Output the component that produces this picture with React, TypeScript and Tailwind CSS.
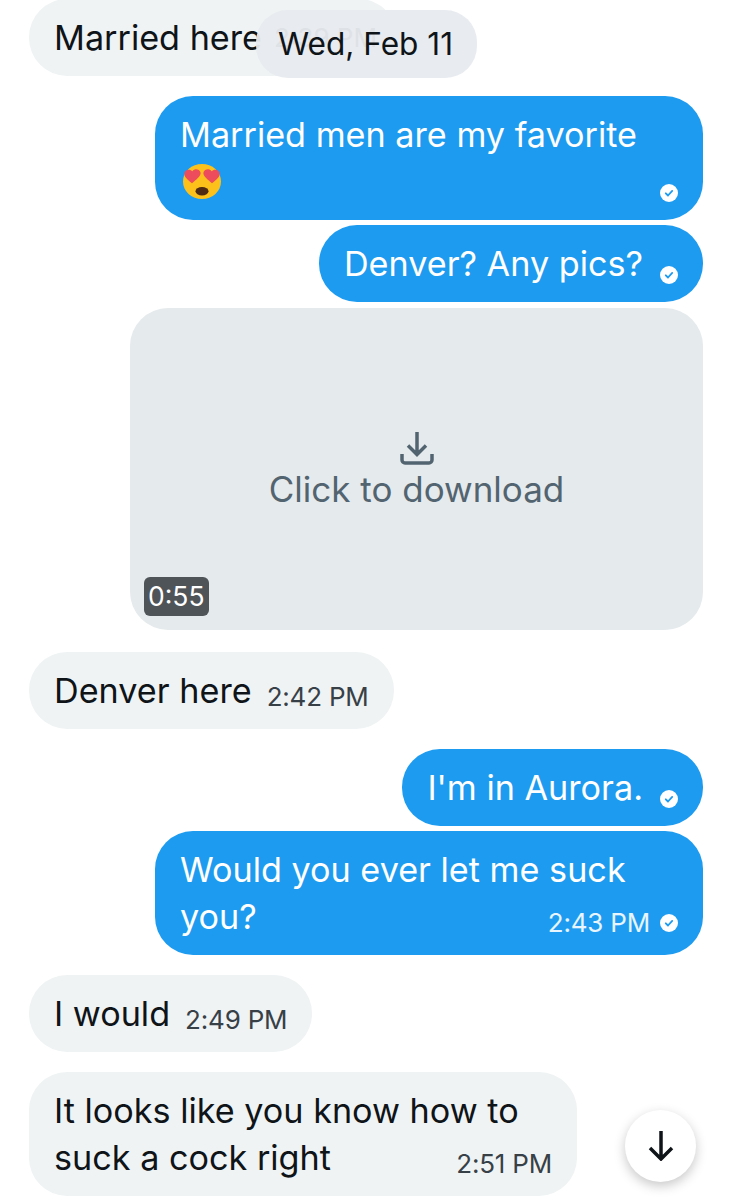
type Message = {
  id: number
  mine: boolean
  lines: string[]
  time?: string
  read?: boolean
  wide?: boolean
  emoji?: boolean
  gap: string
}

const messages: Message[] = [
  { id: 1, mine: true, lines: ['Married men are my favorite'], read: true, wide: true, emoji: true, gap: 'mt-5' },
  { id: 2, mine: true, lines: ['Denver? Any pics?'], read: true, gap: 'mt-[5px]' },
]

const laterMessages: Message[] = [
  { id: 3, mine: false, lines: ['Denver here'], time: '2:42 PM', gap: 'mt-[22px]' },
  { id: 4, mine: true, lines: ["I'm in Aurora."], read: true, gap: 'mt-5' },
  { id: 5, mine: true, lines: ['Would you ever let me suck', 'you?'], time: '2:43 PM', read: true, wide: true, gap: 'mt-[5px]' },
  { id: 6, mine: false, lines: ['I would'], time: '2:49 PM', gap: 'mt-5' },
  { id: 7, mine: false, lines: ['It looks like you know how to', 'suck a cock right'], time: '2:51 PM', wide: true, gap: 'mt-5' },
]

function ReadCheck() {
  return (
    <svg viewBox="0 0 18 18" className="h-[18px] w-[18px] shrink-0">
      <circle cx="9" cy="9" r="9" fill="#fff" />
      <path d="M5.8 9.3l2.2 2.2 4.2-4.6" fill="none" stroke="#1d9bf0" strokeWidth="1.8" strokeLinecap="round" strokeLinejoin="round" />
    </svg>
  )
}

function HeartEyes() {
  return (
    <svg viewBox="0 0 40 40" preserveAspectRatio="none" className="mb-[5px] ml-[2px] h-[37px] w-10">
      <circle cx="20" cy="20" r="19" fill="#fcc21b" />
      <ellipse cx="20" cy="30.500" rx="6.500" ry="4.500" fill="#4e2b12" />
      <path d="M10 22C6.500 18.500 1.500 15.500 2.500 10.500c.8-3.500 5.500-4.500 8-1.500 2-3.500 7-2.500 8 1 1 4-4.500 8-8.500 12z" fill="#ed4c5c" />
      <path d="M30 22c3.500-3.500 8.500-6.500 7.500-11.500-.8-3.500-5.500-4.500-8-1.500-2-3.500-7-2.500-8 1-1 4 4.500 8 8.500 12z" fill="#ed4c5c" />
    </svg>
  )
}

function Meta({ time, read, mine }: { time?: string; read?: boolean; mine: boolean }) {
  if (!time && !read) return null
  return (
    <span className={`flex shrink-0 items-center gap-[10px] ${time ? 'pt-[8px]' : 'mb-[3px]'}`}>
      {time && (
        <span className={`text-[26px] leading-[34px] tracking-[-0.2px] ${mine ? 'text-white/90' : 'text-[#374047]'}`}>
          {time}
        </span>
      )}
      {read && <ReadCheck />}
    </span>
  )
}

function Bubble({ message }: { message: Message }) {
  const { mine, lines, time, read, wide, emoji, gap } = message
  const last = lines[lines.length - 1]

  return (
    <div
      className={`${gap} rounded-[38px] px-[25px] py-[15px] text-[34.2px] leading-[47px] ${wide ? 'w-[548px]' : 'w-fit'} ${
        mine ? 'self-end bg-[#1d9bf0] text-white' : 'self-start bg-[#eff3f4] text-[#0f1419]'
      }`}
    >
      {emoji ? (
        <>
          <div>{last}</div>
          <div className="flex h-[47px] items-end justify-between">
            <HeartEyes />
            <Meta time={time} read={read} mine={mine} />
          </div>
        </>
      ) : (
        <>
          {lines.slice(0, -1).map((line) => (
            <div key={line}>{line}</div>
          ))}
          <div className={`flex items-end justify-between ${time ? 'gap-[15px]' : 'gap-[17px]'}`}>
            <span>{last}</span>
            <Meta time={time} read={read} mine={mine} />
          </div>
        </>
      )}
    </div>
  )
}

function VideoPlaceholder() {
  return (
    <div className="relative mt-[6px] flex h-[322px] w-[573px] flex-col items-center justify-center self-end rounded-[38px] bg-[#e5eaec] pt-[6px] text-[#536471]">
      <svg viewBox="0 0 34 34" className="h-[34px] w-[34px]" fill="none" stroke="#536471" strokeWidth="3.500">
        <path d="M17 1v22M8 14.500l9 9 9-9" />
        <path d="M2 23v6a3 3 0 0 0 3 3h24a3 3 0 0 0 3-3v-6" />
      </svg>
      <span className="mt-[1px] text-[35px] leading-[47px]">Click to download</span>
      <span className="absolute bottom-[14px] left-[14px] rounded-[6px] bg-[#4f5459] px-[4px] text-[26.500px] leading-[39px] text-white">
        0:55
      </span>
    </div>
  )
}

export default function App() {
  return (
    <main className="relative h-[1200px] w-[732px] overflow-hidden bg-white font-['Inter',sans-serif]">
      <div className="flex flex-col px-[29px]">
        <div className="-mt-[1px] flex h-[77px] w-[368px] items-center gap-3 whitespace-nowrap rounded-[38px] bg-[#eff3f4] px-[25px] text-[34.2px] text-[#0f1419]">
          <span>Married here</span>
          <span className="text-[26px] text-[#374047]">2:39 PM</span>
        </div>
        {messages.map((message) => (
          <Bubble key={message.id} message={message} />
        ))}
        <VideoPlaceholder />
        {laterMessages.map((message) => (
          <Bubble key={message.id} message={message} />
        ))}
      </div>

      {/* sticky date label floats over the list */}
      <div className="absolute left-[256px] top-[10px] flex h-[68px] w-[221px] items-center justify-center rounded-[32px] bg-[#e7eaee]/95 pr-[2px] text-[31.6px] text-[#0f1419]">
        Wed, Feb 11
      </div>

      <button className="absolute left-[625px] top-[1110px] flex h-[72px] w-[71px] items-center justify-center rounded-full bg-white shadow-[0_4px_12px_rgba(0,0,0,0.22)]">
        <svg viewBox="0 0 26 30" className="h-[30px] w-[26px]" fill="none" stroke="#0f1419" strokeWidth="3.500">
          <path d="M13 0v27M2 17l11 11 11-11" />
        </svg>
      </button>
    </main>
  )
}
